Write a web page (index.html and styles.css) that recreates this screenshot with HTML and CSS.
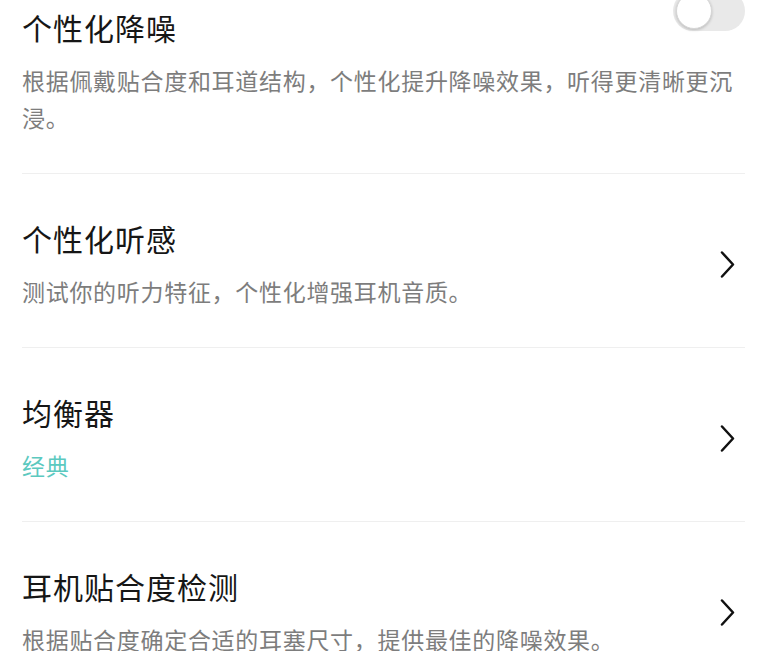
FILE: index.html
```html
<!DOCTYPE html>
<html lang="zh-CN">
<head>
  <meta charset="UTF-8" />
  <meta name="viewport" content="width=device-width, initial-scale=1.0">
  <title>耳机设置</title>
  <link rel="stylesheet" href="styles.css">
</head>

<body>
  <div class="lista">
    <div class="item item-switch">
      <div class="item-head">
        <h3 class="item-titulo">个性化降噪</h3>
        <span class="toggle"><span class="toggle-knob"></span></span>
      </div>
      <p class="item-desc">根据佩戴贴合度和耳道结构，个性化提升降噪效果，听得更清晰更沉浸。</p>
    </div>

    <div class="item">
      <div class="item-texto">
        <h3 class="item-titulo">个性化听感</h3>
        <p class="item-desc">测试你的听力特征，个性化增强耳机音质。</p>
      </div>
      <svg class="flecha" viewBox="0 0 16 27" width="16" height="27">
        <polyline points="3,1.5 14,13.5 3,25.5" />
      </svg>
    </div>

    <div class="item">
      <div class="item-texto">
        <h3 class="item-titulo">均衡器</h3>
        <p class="item-desc valor">经典</p>
      </div>
      <svg class="flecha" viewBox="0 0 16 27" width="16" height="27">
        <polyline points="3,1.5 14,13.5 3,25.5" />
      </svg>
    </div>

    <div class="item">
      <div class="item-texto">
        <h3 class="item-titulo">耳机贴合度检测</h3>
        <p class="item-desc">根据贴合度确定合适的耳塞尺寸，提供最佳的降噪效果。</p>
      </div>
      <svg class="flecha" viewBox="0 0 16 27" width="16" height="27">
        <polyline points="3,1.5 14,13.5 3,25.5" />
      </svg>
    </div>
  </div>
</body>
</html>
```

FILE: styles.css
```css
body {
  margin: 0;
  padding: 0;
  background-color: #fff;
  font-family: 'Noto Sans CJK SC', 'Noto Sans', sans-serif;
  overflow: hidden;
}

.lista {
  margin: -37px 0 0 22px;
  width: 723px;
}

.item {
  display: flex;
  align-items: center;
  justify-content: space-between;
  padding: 44px 0 37px;
  border-bottom: 1px solid #efefef;
}

.item-switch {
  display: block;
}

.item-head {
  display: flex;
  justify-content: space-between;
  align-items: flex-start;
}

.item-titulo {
  margin: 0;
  font-size: 30px;
  font-weight: 400;
  line-height: 40px;
  letter-spacing: 1px;
  color: #161616;
}

.item-desc {
  margin: 15px 0 0;
  font-size: 23px;
  line-height: 37px;
  letter-spacing: 0.7px;
  color: #7d7d7d;
}

.item-desc.valor {
  color: #5cc9bf;
}

.toggle {
  position: relative;
  display: block;
  width: 72px;
  height: 40px;
  margin-top: -16px;
  border-radius: 20px;
  background-color: #e9e9e9;
}

.toggle-knob {
  position: absolute;
  top: 2px;
  left: 3px;
  width: 34px;
  height: 34px;
  border: 1px solid #d6d6d6;
  border-radius: 50%;
  background-color: #fff;
  box-shadow: 0 1px 3px rgba(0, 0, 0, 0.2);
}

.flecha {
  flex-shrink: 0;
  margin-right: 10px;
}

.flecha polyline {
  fill: none;
  stroke: #111;
  stroke-width: 2.5;
  stroke-linecap: round;
  stroke-linejoin: round;
}
```
